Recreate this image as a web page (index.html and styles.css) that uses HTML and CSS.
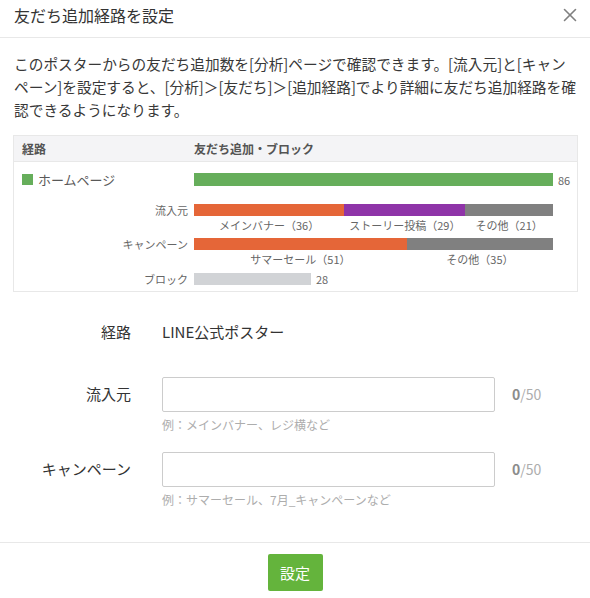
FILE: index.html
```html
<!DOCTYPE html>
<html lang="ja">
<head>
    <meta charset="UTF-8">
    <meta name="viewport" content="width=device-width, initial-scale=1.0">
    <title>友だち追加経路を設定</title>
    <link rel="stylesheet" href="styles.css">
</head>
<body>
    <div class="modal">
        <div class="modal__header">
            <h1 class="modal__title">友だち追加経路を設定</h1>
            <button class="modal__close" type="button" title="閉じる">
                <svg viewBox="0 0 14 14" width="14" height="14" aria-hidden="true">
                    <g stroke="hsl(0,0%,50%)" stroke-width="1.6" stroke-linecap="round">
                        <line x1="1.5" y1="1.5" x2="12.5" y2="12.5" />
                        <line x1="12.5" y1="1.5" x2="1.5" y2="12.5" />
                    </g>
                </svg>
            </button>
        </div>
        <div class="modal__body">
            <p class="modal__desc">このポスターからの友だち追加数を[分析]ページで確認できます。[流入元]と[キャンペーン]を設定すると、[分析]＞[友だち]＞[追加経路]でより詳細に友だち追加経路を確認できるようになります。</p>

            <div class="chart">
                <div class="chart__head">
                    <div class="chart__label chart__label--head">経路</div>
                    <div class="chart__title">友だち追加・ブロック</div>
                </div>
                <div class="chart__row chart__row--home">
                    <div class="chart__label chart__label--route"><span class="chart__swatch"></span>ホームページ</div>
                    <div class="chart__bars">
                        <div class="chart__track">
                            <div class="chart__seg chart__seg--green" style="width:100%"><span class="chart__bar"></span></div>
                        </div>
                        <span class="chart__value">86</span>
                    </div>
                </div>
                <div class="chart__row chart__row--sub">
                    <div class="chart__label">流入元</div>
                    <div class="chart__bars">
                        <div class="chart__track">
                            <div class="chart__seg chart__seg--orange" style="width:41.86%"><span class="chart__bar"></span><span class="chart__cap">メインバナー（36）</span></div>
                            <div class="chart__seg chart__seg--purple" style="width:33.72%"><span class="chart__bar"></span><span class="chart__cap">ストーリー投稿（29）</span></div>
                            <div class="chart__seg chart__seg--grey" style="width:24.42%"><span class="chart__bar"></span><span class="chart__cap">その他（21）</span></div>
                        </div>
                    </div>
                </div>
                <div class="chart__row chart__row--sub">
                    <div class="chart__label">キャンペーン</div>
                    <div class="chart__bars">
                        <div class="chart__track">
                            <div class="chart__seg chart__seg--orange" style="width:59.30%"><span class="chart__bar"></span><span class="chart__cap">サマーセール（51）</span></div>
                            <div class="chart__seg chart__seg--grey" style="width:40.70%"><span class="chart__bar"></span><span class="chart__cap">その他（35）</span></div>
                        </div>
                    </div>
                </div>
                <div class="chart__row chart__row--block">
                    <div class="chart__label">ブロック</div>
                    <div class="chart__bars">
                        <div class="chart__track chart__track--block">
                            <div class="chart__seg chart__seg--light" style="width:32.56%"><span class="chart__bar"></span></div>
                            <span class="chart__value">28</span>
                        </div>
                    </div>
                </div>
            </div>

            <div class="form">
                <div class="form__label">経路</div>
                <div class="form__static">LINE公式ポスター</div>
                <div></div>

                <label class="form__label form__label--input" for="source">流入元</label>
                <div class="form__field">
                    <input class="form__input" type="text" id="source" maxlength="50">
                    <div class="form__hint">例：メインバナー、レジ横など</div>
                </div>
                <div class="form__count"><b>0</b>/50</div>

                <label class="form__label form__label--input" for="campaign">キャンペーン</label>
                <div class="form__field">
                    <input class="form__input" type="text" id="campaign" maxlength="50">
                    <div class="form__hint">例：サマーセール、7月_キャンペーンなど</div>
                </div>
                <div class="form__count"><b>0</b>/50</div>
            </div>
        </div>
        <div class="modal__footer">
            <button class="modal__submit" type="button">設定</button>
        </div>
    </div>
</body>
</html>
```

FILE: styles.css
```css
* {
    border: 0;
    box-sizing: border-box;
    margin: 0;
    padding: 0;
}
:root {
    --fg: hsl(0,0%,20%);
    --muted: hsl(0,0%,40%);
    --faint: hsl(0,0%,68%);
    --line: hsl(0,0%,91%);
    --green: hsl(112,34%,52%);
    --orange: hsl(16,77%,56%);
    --purple: hsl(287,53%,43%);
    --grey: hsl(0,0%,50%);
    --light: hsl(220,6%,83%);
    --btn: hsl(100,50%,47%);
}
body,
button,
input {
    color: var(--fg);
    font-family: "Noto Sans CJK JP", "Noto Sans", sans-serif;
}
body {
    background-color: hsl(0,0%,100%);
}
.modal {
    width: 590px;
}
.modal__header {
    display: flex;
    align-items: center;
    justify-content: space-between;
    height: 38px;
    padding: 0 14px 1px 14px;
    border-bottom: 1px solid var(--line);
}
.modal__title {
    font-size: 16px;
    font-weight: 400;
    line-height: 1;
    margin-top: -7px;
}
.modal__close {
    background: none;
    cursor: pointer;
    display: block;
    margin-top: -7px;
    margin-right: -1px;
}
.modal__close svg {
    display: block;
}
.modal__body {
    padding: 14px 12px 0 14px;
}
.modal__desc {
    font-size: 14.7px;
    line-height: 23px;
    color: hsl(0,0%,22%);
}

/* Chart */
.chart {
    border: 1px solid var(--line);
    margin: 14px 0 0 -1px;
    width: 565px;
    padding-bottom: 6px;
}
.chart__head {
    display: flex;
    align-items: center;
    height: 26px;
    background-color: hsl(220,10%,96%);
    border-bottom: 1px solid var(--line);
    font-size: 12px;
    font-weight: 700;
    color: hsl(0,0%,33%);
}
.chart__row,
.chart__head {
    display: grid;
    grid-template-columns: 180px 1fr;
}
.chart__label {
    font-size: 11px;
    color: var(--muted);
    text-align: right;
    padding-right: 6px;
    line-height: 12px;
    white-space: nowrap;
}
.chart__label--head {
    font-size: 12px;
    font-weight: 700;
    color: hsl(0,0%,33%);
    text-align: left;
    padding-left: 8px;
}
.chart__label--route {
    display: flex;
    align-items: center;
    gap: 5px;
    text-align: left;
    padding-left: 8px;
    font-size: 13px;
    color: hsl(0,0%,35%);
    line-height: 13px;
}
.chart__swatch {
    display: block;
    width: 11px;
    height: 11px;
    background-color: var(--green);
}
.chart__bars {
    display: flex;
    align-items: flex-start;
    gap: 5px;
}
.chart__track {
    display: flex;
    width: 359px;
}
.chart__track--block {
    align-items: center;
    gap: 5px;
}
.chart__seg {
    display: flex;
    flex-direction: column;
    align-items: center;
}
.chart__bar {
    display: block;
    width: 100%;
    height: 12px;
}
.chart__seg--green .chart__bar { background-color: var(--green); height: 13px; }
.chart__seg--orange .chart__bar { background-color: var(--orange); }
.chart__seg--purple .chart__bar { background-color: var(--purple); }
.chart__seg--grey .chart__bar { background-color: var(--grey); }
.chart__seg--light .chart__bar { background-color: var(--light); }
.chart__cap {
    font-size: 11px;
    line-height: 14px;
    margin-top: 2px;
    color: var(--muted);
    white-space: nowrap;
}
.chart__value {
    font-size: 11px;
    line-height: 12px;
    color: var(--muted);
}
.chart__row--home {
    margin-top: 11px;
    align-items: center;
}
.chart__row--home .chart__bars {
    align-items: center;
}
.chart__row--sub {
    margin-top: 6px;
}
.chart__row--home + .chart__row--sub {
    margin-top: 18px;
}
.chart__row--block {
    margin-top: 7px;
}

/* Form */
.form {
    display: grid;
    grid-template-columns: 118px 333px auto;
    column-gap: 31px;
    align-items: start;
    margin: 0 0 0 -1px;
    padding-top: 29px;
}
.form__label {
    font-size: 15px;
    line-height: 22px;
    text-align: right;
}
.form__static {
    font-size: 15px;
    line-height: 22px;
}
.form__label--input,
.form__field,
.form__count {
    margin-top: 34px;
}
.form__field ~ .form__field,
.form__label--input ~ .form__label--input,
.form__count ~ .form__count {
    margin-top: 18px;
}
.form__label--input {
    transform: translateY(6px);
}
.form__input {
    display: block;
    width: 333px;
    height: 35px;
    border: 1px solid hsl(0,0%,80%);
    border-radius: 2px;
    font-size: 14px;
    padding: 0 10px;
    outline: none;
}
.form__hint {
    font-size: 12px;
    line-height: 18px;
    margin-top: 4px;
    color: var(--faint);
}
.form__count {
    font-size: 14px;
    line-height: 35px;
    color: var(--faint);
    margin-left: -14px;
}
.form__count b {
    color: hsl(0,0%,55%);
}

/* Footer */
.modal__footer {
    display: flex;
    justify-content: center;
    margin-top: 33px;
    padding-top: 11px;
    border-top: 1px solid var(--line);
}
.modal__submit {
    background-color: var(--btn);
    border-radius: 2px;
    color: hsl(0,0%,100%);
    cursor: pointer;
    font-size: 15px;
    width: 55px;
    height: 37px;
}
```
